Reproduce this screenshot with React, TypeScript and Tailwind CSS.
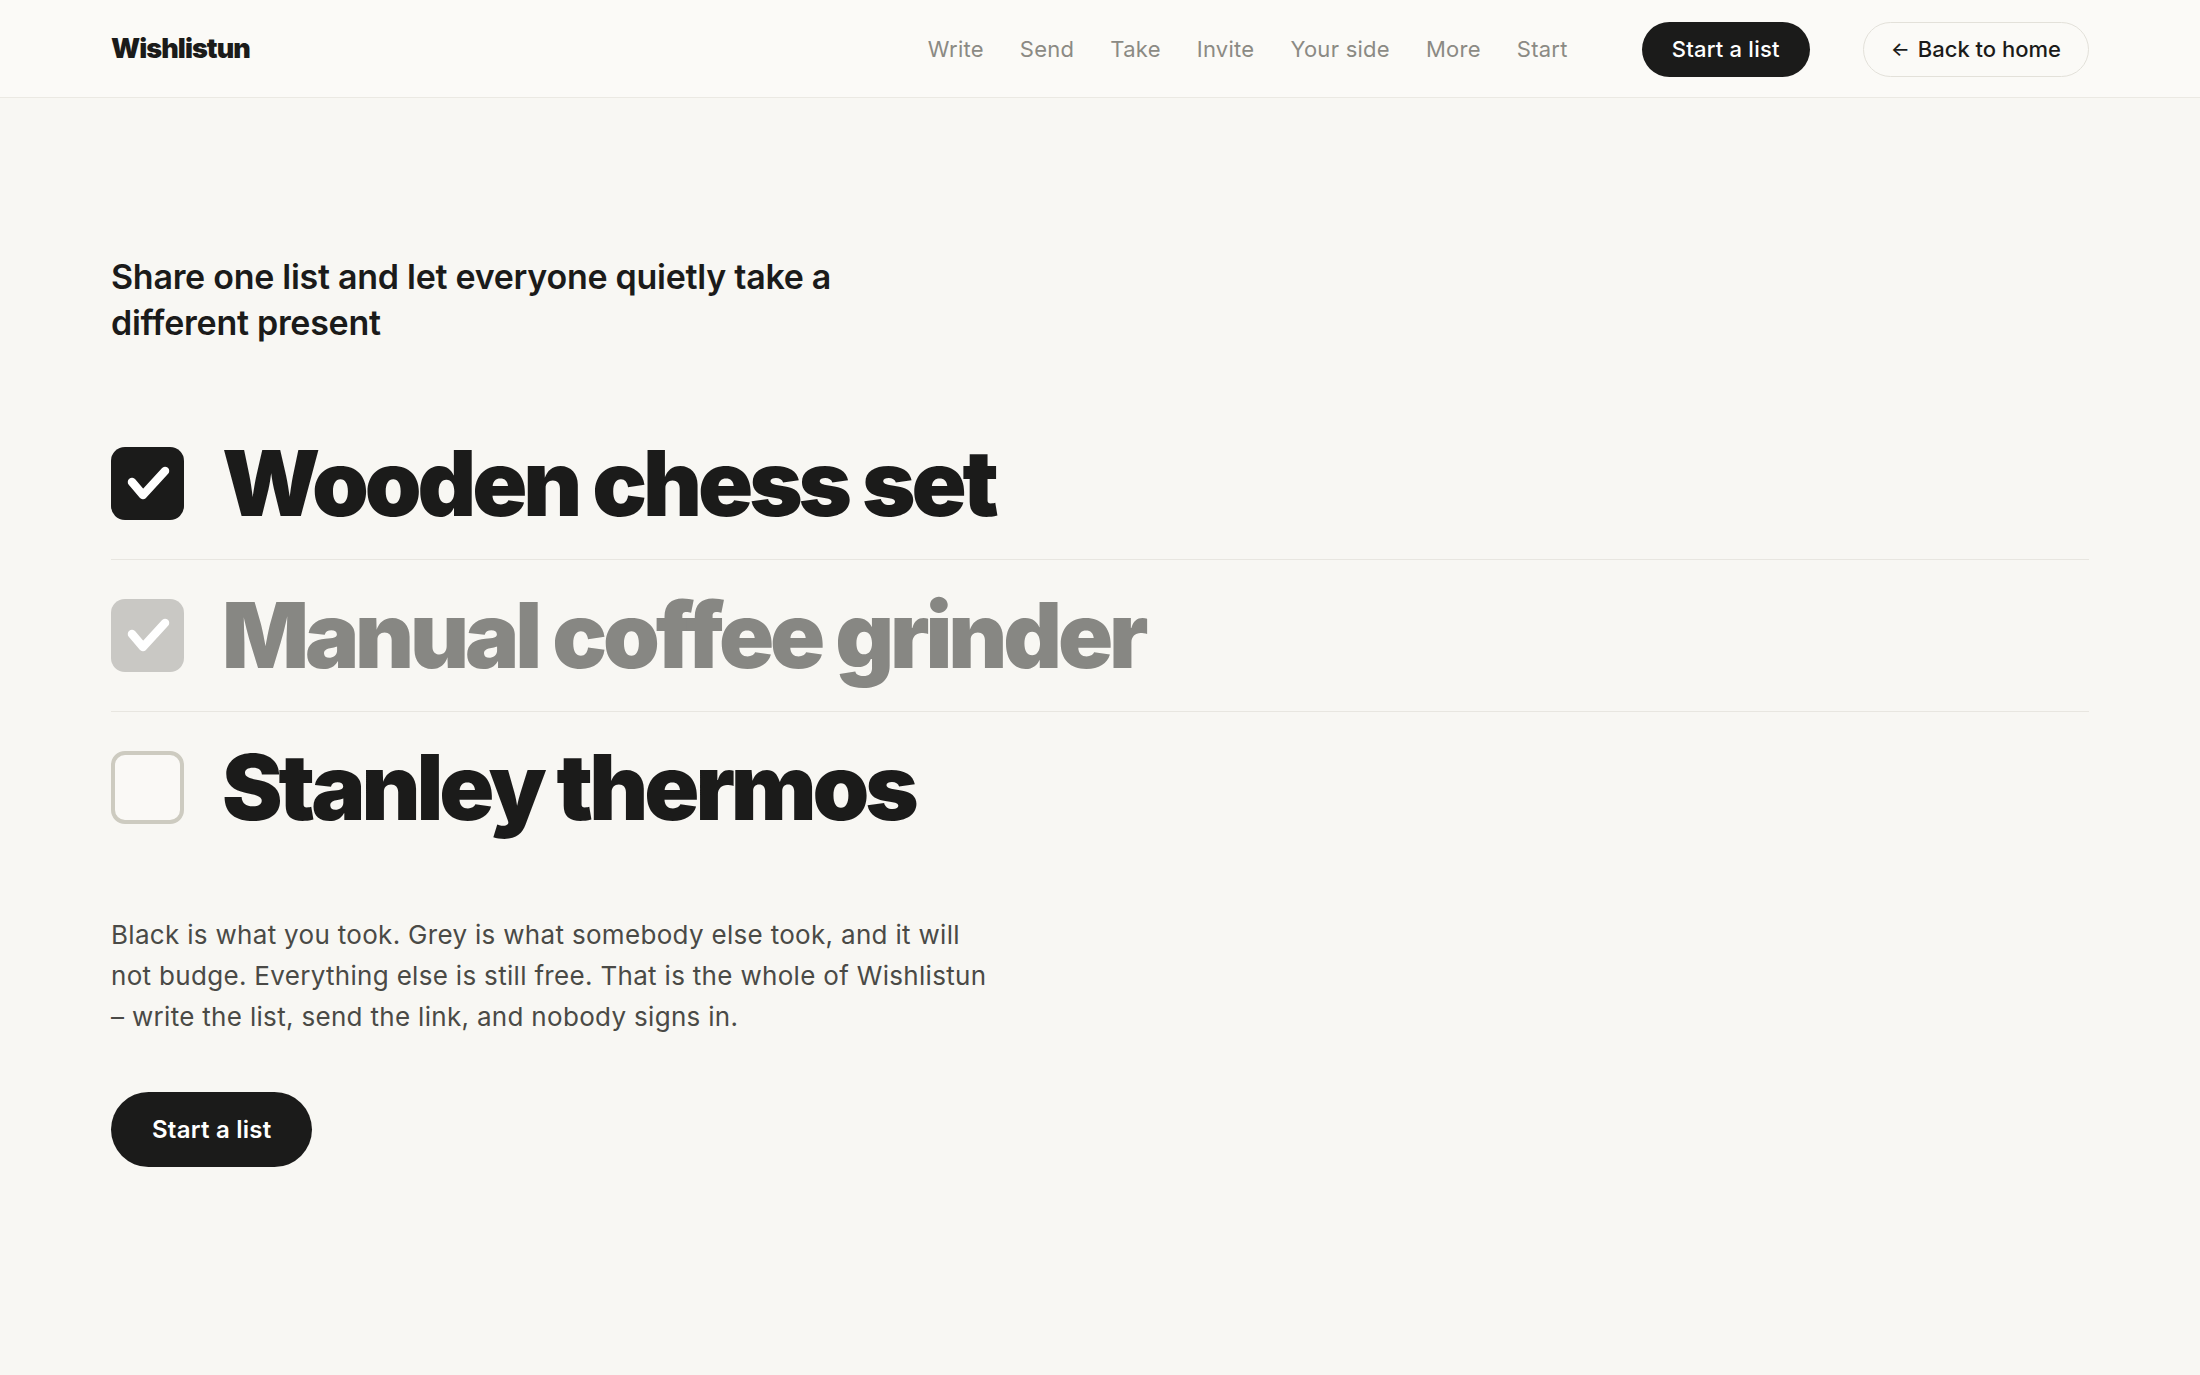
import React from "react";

const navLinks = ["Write", "Send", "Take", "Invite", "Your side", "More", "Start"];

type Item = { label: string; state: "mine" | "taken" | "free" };

const items: Item[] = [
  { label: "Wooden chess set", state: "mine" },
  { label: "Manual coffee grinder", state: "taken" },
  { label: "Stanley thermos", state: "free" },
];

function Check() {
  return (
    <svg viewBox="0 0 73 73" className="h-full w-full" fill="none">
      <path
        d="M21 35 L32 48 L54 24"
        stroke="white"
        strokeWidth="8.5"
        strokeLinecap="round"
        strokeLinejoin="round"
      />
    </svg>
  );
}

function Box({ state }: { state: Item["state"] }) {
  if (state === "mine") {
    return (
      <div className="h-[73px] w-[73px] shrink-0 rounded-[14px] bg-[#1b1b1a]">
        <Check />
      </div>
    );
  }
  if (state === "taken") {
    return (
      <div className="h-[73px] w-[73px] shrink-0 rounded-[14px] bg-[#c9c8c4]">
        <Check />
      </div>
    );
  }
  return (
    <div className="h-[73px] w-[73px] shrink-0 rounded-[14px] border-[4px] border-[#cdcbc0] bg-[#faf9f6]" />
  );
}

export default function App() {
  return (
    <div
      className="min-h-[1375px] bg-[#f8f7f3] text-[#1b1b1a]"
      style={{ fontFamily: "Inter, 'Noto Sans', sans-serif" }}
    >
      <header className="flex h-[98px] items-center border-b border-[#ebe9e3] bg-[#fbfaf7] px-[111px] pt-[1px]">
        <div className="text-[27px] font-black tracking-[-0.035em] text-[#1b1b1a]">Wishlistun</div>
        <nav className="ml-auto flex items-center gap-[36px] text-[22px] tracking-[0.012em] text-[#8b8a84]">
          {navLinks.map((l) => (
            <a key={l} href="#">
              {l}
            </a>
          ))}
        </nav>
        <a
          href="#"
          className="ml-[74px] flex h-[55px] items-center rounded-full bg-[#1b1b1a] px-[30px] text-[22px] font-medium tracking-[0.01em] text-white"
        >
          Start a list
        </a>
        <a
          href="#"
          className="ml-[53px] flex h-[55px] items-center gap-[8px] rounded-full border border-[#e3e1da] bg-[#fbfaf7] px-[27px] text-[22px] font-medium text-[#1b1b1a]"
        >
          <span className="text-[20px]">←</span>
          Back to home
        </a>
      </header>

      <main className="px-[111px] pt-[156px]">
        <h2 className="max-w-[780px] text-[34px] font-semibold leading-[46px] tracking-[-0.008em] text-[#1b1b1a]">
          Share one list and let everyone quietly take a different present
        </h2>

        <ul className="mt-[62px]">
          {items.map((it, i) => (
            <li
              key={it.label}
              className={`flex items-center gap-[38px] py-[39px] ${
                i < items.length - 1 ? "border-b border-[#e8e6e0]" : ""
              }`}
            >
              <Box state={it.state} />
              <span
                className={`text-[91px] font-black leading-[73px] tracking-[-0.045em] ${
                  it.state === "taken" ? "text-[#878783]" : "text-[#1b1b1a]"
                }`}
              >
                {it.label}
              </span>
            </li>
          ))}
        </ul>

        <p className="mt-[51px] max-w-[892px] text-[26px] leading-[41px] tracking-[0.012em] text-[#4a4a46]">
          Black is what you took. Grey is what somebody else took, and it will not budge. Everything else is still free.
          That is the whole of Wishlistun – write the list, send the link, and nobody signs in.
        </p>

        <a
          href="#"
          className="mt-[55px] inline-flex h-[75px] items-center rounded-full bg-[#1b1b1a] px-[41px] text-[24px] font-semibold tracking-[0.01em] text-white"
        >
          Start a list
        </a>
      </main>
    </div>
  );
}
